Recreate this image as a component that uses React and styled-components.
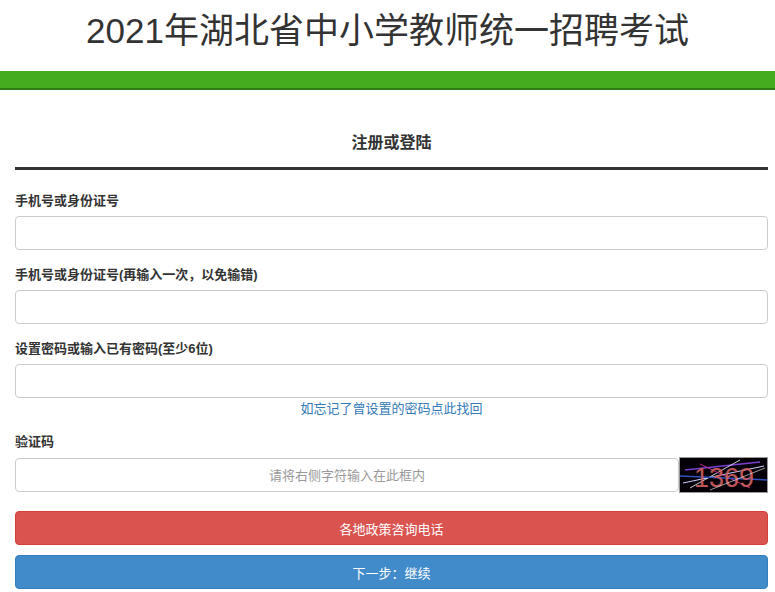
import React from 'react';
import styled, { createGlobalStyle } from 'styled-components';

const Global = createGlobalStyle`
    body {
        margin: 0;
        font-family: "Liberation Sans", "Noto Sans CJK SC", sans-serif;
        color: #333;
        background: #fff;
    }
`;

const Title = styled.h1`
    margin: 0;
    height: 71px;
    line-height: 62px;
    text-align: center;
    font-size: 35px;
    font-weight: normal;
    color: #333;
`;

const GreenBar = styled.div`
    height: 17px;
    background: #44ac1e;
    border-bottom: 2px solid #2f7d12;
`;

const Main = styled.div`
    padding: 0 7px 0 15px;
`;

const Heading = styled.h2`
    margin: 0;
    padding-top: 39px;
    height: 38px;
    text-align: center;
    font-size: 16px;
    font-weight: bold;
    border-bottom: 3px solid #333;
`;

const Field = styled.div`
    margin-top: ${(p) => p.$top || 16}px;
`;

const Label = styled.div`
    font-size: 13px;
    font-weight: bold;
    line-height: 18px;
    margin-bottom: 6px;
`;

const Input = styled.input`
    display: block;
    box-sizing: border-box;
    width: 100%;
    height: 34px;
    border: 1px solid #ccc;
    border-radius: 4px;
    padding: 0 12px;
    font-family: inherit;
    font-size: 13px;
    text-align: ${(p) => (p.$center ? 'center' : 'left')};
    &::placeholder { color: #999; }
`;

const Forgot = styled.a`
    display: block;
    text-align: center;
    color: #337ab7;
    font-size: 13px;
    line-height: 20px;
    margin-top: 1px;
    text-decoration: none;
`;

const CaptchaRow = styled.div`
    display: flex;
    align-items: center;
`;

const Captcha = styled.div`
    flex: none;
    width: 87px;
    height: 34px;
    border: 1px solid #999;
    background: #000;
`;

const Button = styled.button`
    display: block;
    width: 100%;
    height: 34px;
    margin-top: ${(p) => p.$top}px;
    border: 1px solid ${(p) => p.$border};
    border-radius: 4px;
    background: ${(p) => p.$bg};
    color: #fff;
    font-family: inherit;
    font-size: 13px;
`;

const CaptchaImage = () => (
    <svg width="87" height="34" viewBox="0 0 87 34">
        <rect width="87" height="34" fill="#050008" />
        <line x1="5" y1="12" x2="80" y2="4" stroke="#7a3fd0" strokeWidth="1.5" />
        <line x1="3" y1="25" x2="84" y2="8" stroke="#d0d0ff" strokeWidth="1" />
        <line x1="10" y1="30" x2="60" y2="2" stroke="#ffffff" strokeWidth="0.8" />
        <line x1="20" y1="6" x2="70" y2="30" stroke="#c03090" strokeWidth="1" />
        <line x1="0" y1="18" x2="87" y2="22" stroke="#3050c0" strokeWidth="1.5" />
        <text x="44" y="29" textAnchor="middle" fontSize="27" fill="#d06060"
            fontFamily="Liberation Sans, sans-serif" opacity="0.9">1369</text>
        <line x1="30" y1="32" x2="85" y2="10" stroke="#ffffff" strokeWidth="0.6" />
    </svg>
);

export default function App() {
    return (
        <>
            <Global />
            <Title>2021年湖北省中小学教师统一招聘考试</Title>
            <GreenBar />
            <Main>
                <Heading>注册或登陆</Heading>
                <Field $top={22}>
                    <Label>手机号或身份证号</Label>
                    <Input />
                </Field>
                <Field>
                    <Label>手机号或身份证号(再输入一次，以免输错)</Label>
                    <Input />
                </Field>
                <Field>
                    <Label>设置密码或输入已有密码(至少6位)</Label>
                    <Input type="password" />
                </Field>
                <Forgot href="#">如忘记了曾设置的密码点此找回</Forgot>
                <Field $top={14}>
                    <Label>验证码</Label>
                    <CaptchaRow>
                        <Input $center placeholder="请将右侧字符输入在此框内" />
                        <Captcha>
                            <CaptchaImage />
                        </Captcha>
                    </CaptchaRow>
                </Field>
                <Button $top={18} $bg="#d9534f" $border="#d43f3a">各地政策咨询电话</Button>
                <Button $top={10} $bg="#428bca" $border="#357ebd">下一步：继续</Button>
            </Main>
        </>
    );
}
